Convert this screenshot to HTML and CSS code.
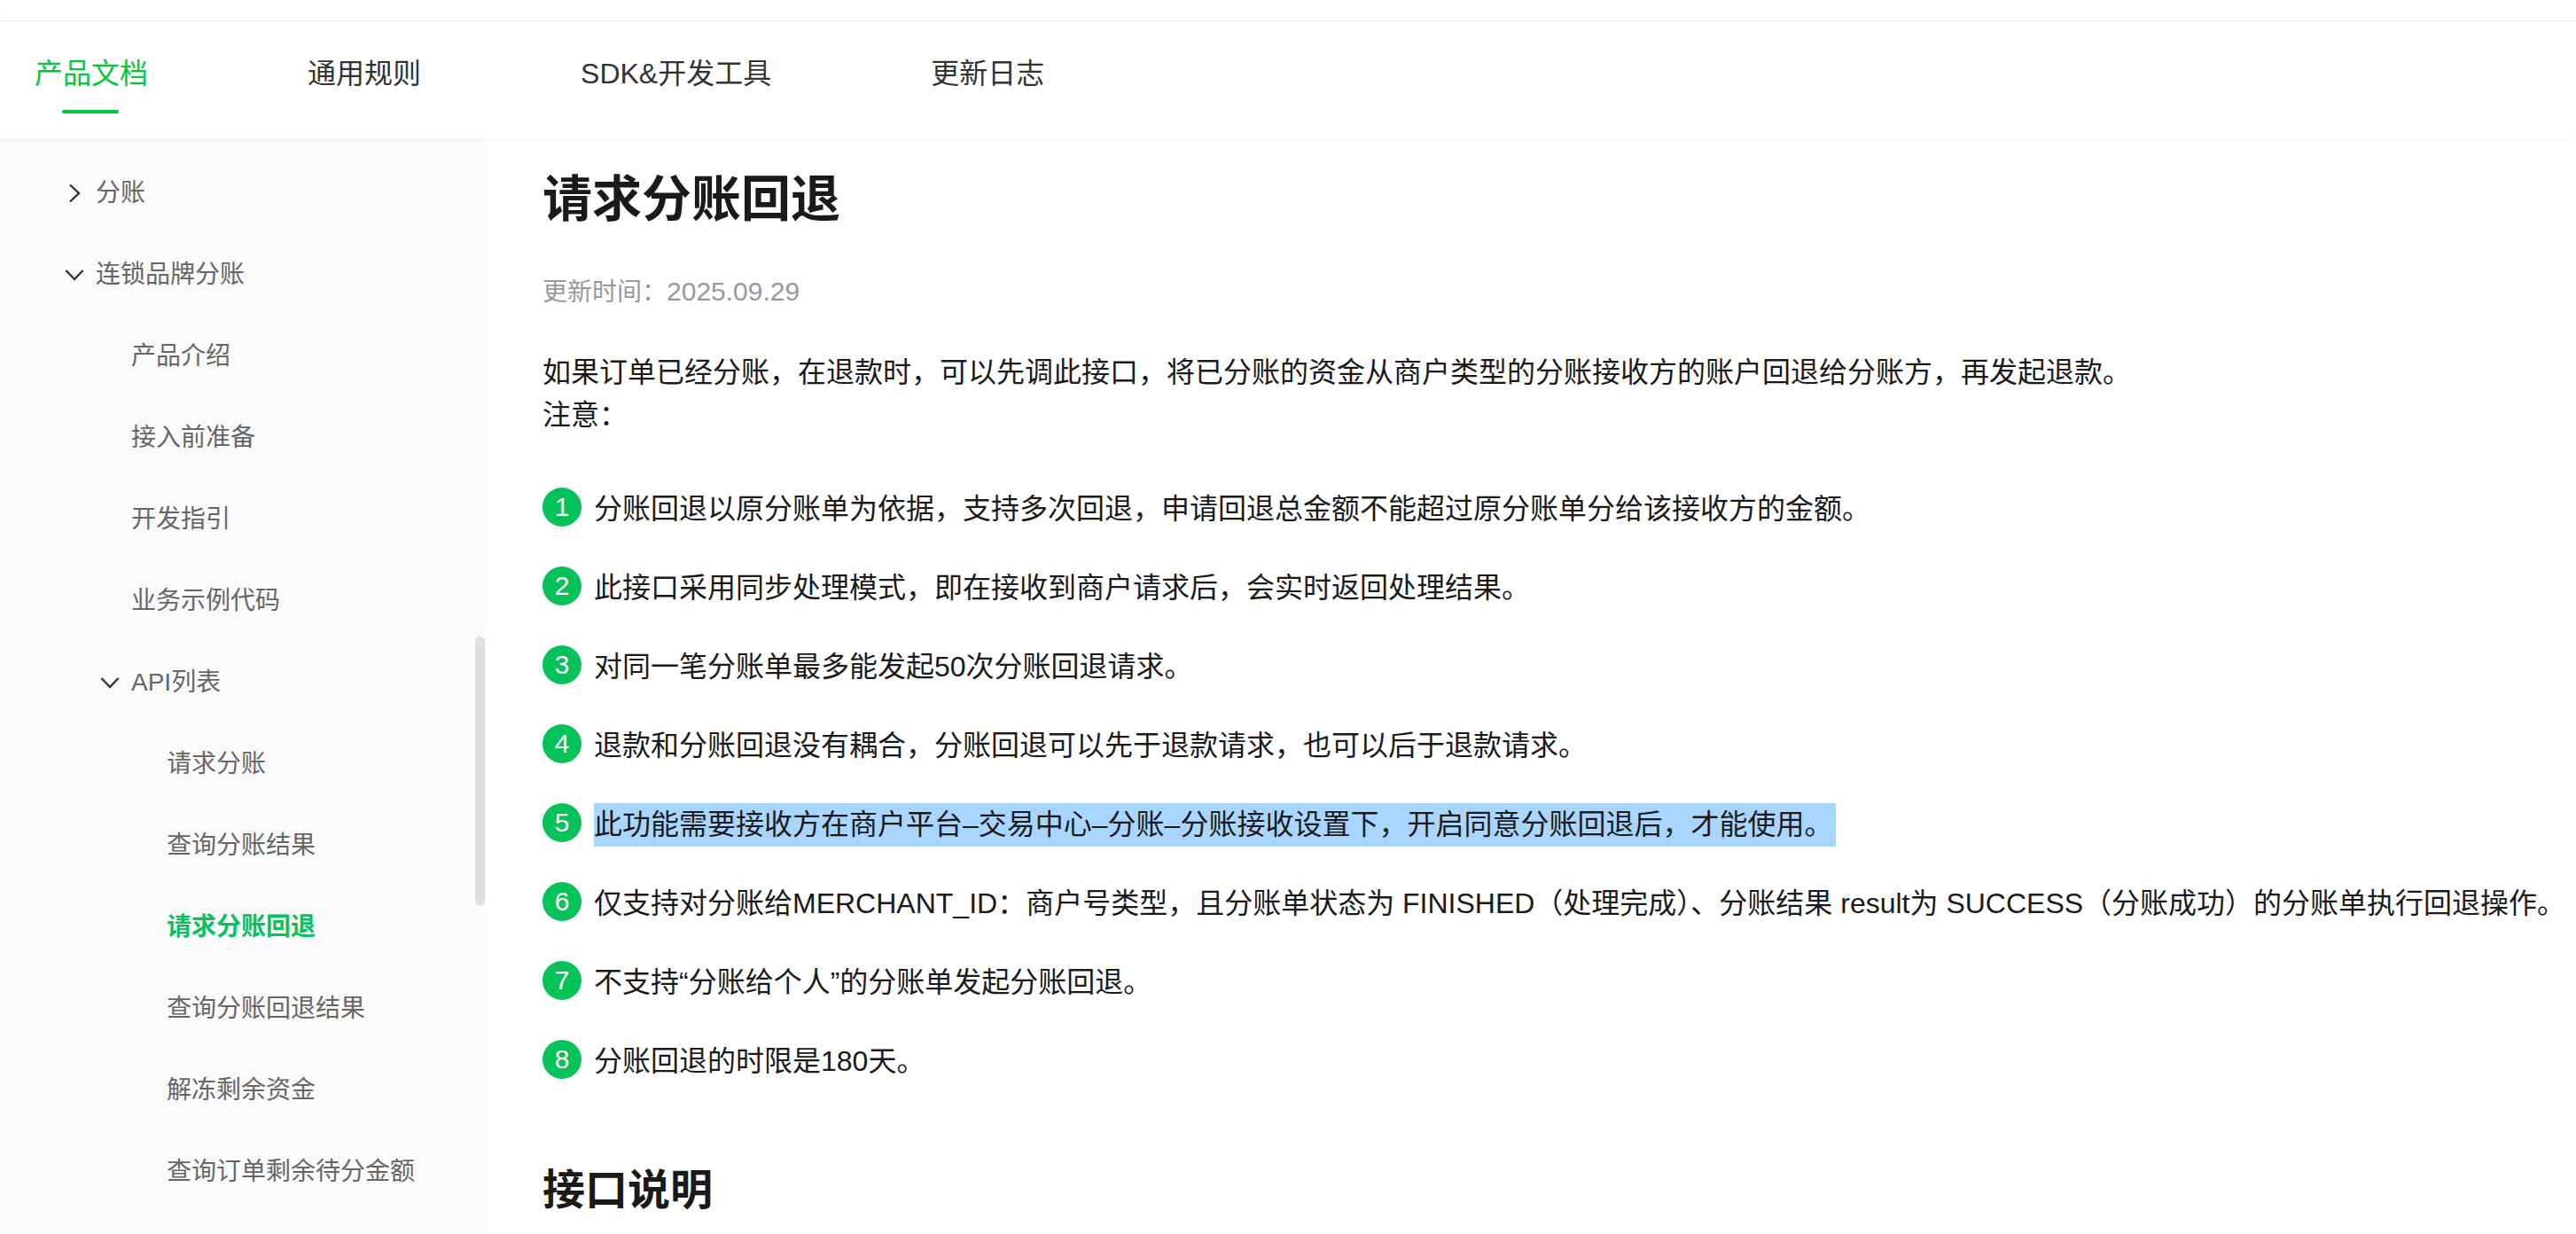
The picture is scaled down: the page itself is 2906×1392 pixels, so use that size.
FILE: index.html
```html
<!DOCTYPE html>
<html lang="zh-CN">
<head>
<meta charset="utf-8">
<title>请求分账回退</title>
<link rel="stylesheet" href="styles.css">
</head>
<body>
<div class="page">
  <div class="topstrip"></div>
  <header class="header">
    <nav class="nav">
      <a class="nav-item active">产品文档</a>
      <a class="nav-item">通用规则</a>
      <a class="nav-item">SDK&amp;开发工具</a>
      <a class="nav-item">更新日志</a>
    </nav>
  </header>
  <div class="body">
    <aside class="sidebar">
      <ul class="menu">
        <li class="item l1"><svg class="chev right" viewBox="0 0 14 22"><path d="M2 1.5 12 11 2 20.5"/></svg>分账</li>
        <li class="item l1"><svg class="chev down" viewBox="0 0 22 14"><path d="M1.5 2 11 12 20.5 2"/></svg>连锁品牌分账</li>
        <li class="item l2">产品介绍</li>
        <li class="item l2">接入前准备</li>
        <li class="item l2">开发指引</li>
        <li class="item l2">业务示例代码</li>
        <li class="item l2 has-chev"><svg class="chev down" viewBox="0 0 22 14"><path d="M1.5 2 11 12 20.5 2"/></svg>API列表</li>
        <li class="item l3">请求分账</li>
        <li class="item l3">查询分账结果</li>
        <li class="item l3 current">请求分账回退</li>
        <li class="item l3">查询分账回退结果</li>
        <li class="item l3">解冻剩余资金</li>
        <li class="item l3">查询订单剩余待分金额</li>
      </ul>
      <div class="scrollthumb"></div>
    </aside>
    <main class="main">
      <h1 class="title">请求分账回退</h1>
      <p class="date">更新时间：<span class="date-num">2025.09.29</span></p>
      <p class="intro">如果订单已经分账，在退款时，可以先调此接口，将已分账的资金从商户类型的分账接收方的账户回退给分账方，再发起退款。<br>注意：</p>
      <ol class="notes">
        <li class="note"><span class="num">1</span><span class="note-text">分账回退以原分账单为依据，支持多次回退，申请回退总金额不能超过原分账单分给该接收方的金额。</span></li>
        <li class="note"><span class="num">2</span><span class="note-text">此接口采用同步处理模式，即在接收到商户请求后，会实时返回处理结果。</span></li>
        <li class="note"><span class="num">3</span><span class="note-text">对同一笔分账单最多能发起50次分账回退请求。</span></li>
        <li class="note"><span class="num">4</span><span class="note-text">退款和分账回退没有耦合，分账回退可以先于退款请求，也可以后于退款请求。</span></li>
        <li class="note"><span class="num">5</span><span class="note-text selected">此功能需要接收方在商户平台–交易中心–分账–分账接收设置下，开启同意分账回退后，才能使用。</span></li>
        <li class="note"><span class="num">6</span><span class="note-text">仅支持对分账给MERCHANT_ID：商户号类型，且分账单状态为 FINISHED（处理完成）、分账结果 result为 SUCCESS（分账成功）的分账单执行回退操作。</span></li>
        <li class="note"><span class="num">7</span><span class="note-text">不支持“分账给个人”的分账单发起分账回退。</span></li>
        <li class="note"><span class="num">8</span><span class="note-text">分账回退的时限是180天。</span></li>
      </ol>
      <h2 class="subtitle">接口说明</h2>
    </main>
  </div>
</div>
</body>
</html>
```

FILE: styles.css
```css
* { box-sizing: border-box; }
html, body { margin: 0; padding: 0; height: 100%; overflow: hidden; background: #fff; }
body { font-family: "Liberation Sans", "Noto Sans CJK SC", sans-serif; color: #1a1a1a; }
.page { display: flex; flex-direction: column; height: 1392px; overflow: hidden; }
.topstrip { height: 24px; flex: none; background: #fff; border-bottom: 1px solid #f2f2f2; }
.header { height: 132px; flex: none; background: #fff; position: relative; z-index: 1; box-shadow: 0 1px 6px rgba(0, 0, 0, 0.035); }
.nav { display: flex; gap: 180px; padding-left: 39px; height: 100%; }
.nav-item { font-size: 32px; line-height: 46px; color: #333; padding-top: 36px; position: relative; white-space: nowrap; }
.nav-item.active { color: #00c83c; }
.nav-item.active::after { content: ""; position: absolute; left: 31px; width: 64px; top: 100px; height: 4px; border-radius: 2px; background: #00c83c; }
.body { display: flex; flex: 1; min-height: 0; }
.sidebar { width: 548px; flex: none; background: #fafafa; position: relative; padding-top: 13px; overflow: hidden; }
.menu { list-style: none; margin: 0; padding: 0; }
.item { height: 92px; display: flex; align-items: center; font-size: 28px; color: #666; white-space: nowrap; position: relative; }
.l1 { padding-left: 108px; }
.l2 { padding-left: 148px; }
.l3 { padding-left: 188px; }
.current { color: #07c160; font-weight: 700; }
.chev { position: absolute; fill: none; stroke: #333; stroke-width: 2.4; }
.chev.right { left: 77px; top: 38px; width: 14px; height: 22px; }
.chev.down { left: 73px; top: 42px; width: 22px; height: 14px; }
.has-chev .chev.down { left: 113px; }
.scrollthumb { position: absolute; left: 536px; top: 562px; width: 11px; height: 303px; border-radius: 6px; background: #e0e0e0; }
.main { flex: 1; min-width: 0; padding-left: 64px; }
.title { margin: 33px 0 0; font-size: 56px; line-height: 72px; font-weight: 700; color: #1a1a1a; }
.date { margin: 48px 0 0; font-size: 28px; line-height: 40px; color: #999; }
.date-num { font-size: 30px; }
.intro { margin: 46px 0 0; font-size: 32px; line-height: 48px; }
.notes { list-style: none; margin: 38px 0 0; padding: 0; }
.note { display: flex; align-items: flex-start; gap: 14px; height: 89px; padding-top: 20px; }
.num { width: 44px; height: 44px; flex: none; border-radius: 50%; background: #06c25b; color: #fff; font-size: 30px; line-height: 44px; text-align: center; }
.note-text { font-size: 32px; line-height: 49px; white-space: nowrap; }
.selected { background: #a8d6ff; padding-right: 4px; }
.subtitle { margin: 68px 0 0; font-size: 48px; line-height: 66px; font-weight: 700; color: #1a1a1a; }
```
